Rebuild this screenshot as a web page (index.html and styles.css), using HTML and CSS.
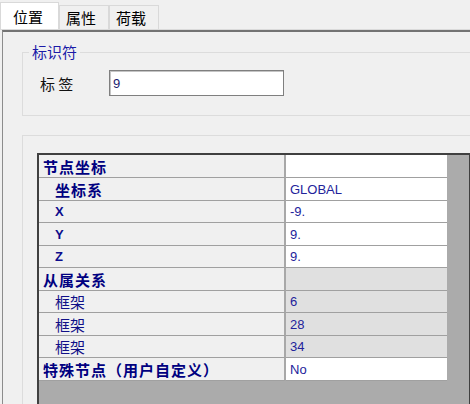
FILE: index.html
```html
<!DOCTYPE html>
<html lang="zh-CN">
<head>
<meta charset="utf-8">
<title>节点属性</title>
<link rel="stylesheet" href="styles.css">
</head>
<body>
<div class="tabs">
  <div class="tab tab-active">位置</div>
  <div class="tab">属性</div>
  <div class="tab">荷载</div>
</div>
<div class="panel">
  <fieldset class="group">
    <legend class="legend">标识符</legend>
    <div class="field-row">
      <label class="field-label" for="tag">标 签</label>
      <input class="field-input" id="tag" type="text" value="9">
    </div>
  </fieldset>
  <div class="group2">
    <div class="grid">
      <div class="row tall">
        <div class="cell key cat">节点坐标</div>
        <div class="cell val"></div>
      </div>
      <div class="row tall">
        <div class="cell key sub strong">坐标系</div>
        <div class="cell val">GLOBAL</div>
      </div>
      <div class="row">
        <div class="cell key sub lat">X</div>
        <div class="cell val">-9.</div>
      </div>
      <div class="row tall">
        <div class="cell key sub lat">Y</div>
        <div class="cell val">9.</div>
      </div>
      <div class="row">
        <div class="cell key sub lat">Z</div>
        <div class="cell val">9.</div>
      </div>
      <div class="row tall">
        <div class="cell key cat">从属关系</div>
        <div class="cell val ro"></div>
      </div>
      <div class="row">
        <div class="cell key sub">框架</div>
        <div class="cell val ro">6</div>
      </div>
      <div class="row tall">
        <div class="cell key sub">框架</div>
        <div class="cell val ro">28</div>
      </div>
      <div class="row">
        <div class="cell key sub">框架</div>
        <div class="cell val ro">34</div>
      </div>
      <div class="row tall">
        <div class="cell key cat">特殊节点（用户自定义）</div>
        <div class="cell val">No</div>
      </div>
    </div>
  </div>
</div>
</body>
</html>
```
FILE: styles.css
```css
html, body {
  margin: 0;
  padding: 0;
}
body {
  width: 470px;
  height: 404px;
  overflow: hidden;
  background: #f0f0f0;
  font-family: "Noto Sans CJK SC", "Noto Sans", sans-serif;
  color: #000;
}

/* tabs */
.tabs {
  display: flex;
  align-items: flex-end;
  height: 30px;
  box-sizing: border-box;
  border-bottom: 1px solid #dadada;
}
.tab {
  box-sizing: border-box;
  width: 50px;
  height: 24px;
  padding-left: 6px;
  border: 1px solid #d9d9d9;
  border-bottom: none;
  background: #f0f0f0;
  display: flex;
  align-items: center;
  font-size: 15px;
  line-height: 1;
}
.tab-active {
  width: 59px;
  height: 27px;
  padding-left: 12px;
  background: #fff;
}

/* panel */
.panel {
  box-sizing: border-box;
  margin-left: 2px;
  width: 468px;
  height: 374px;
  border-top: 2px solid #737373;
  border-left: 1px solid #8c8c8c;
  overflow: hidden;
}

.group {
  margin: 11px 0 0 19px;
  padding: 0;
  width: 448px;
  box-sizing: border-box;
  border: 1px solid #dcdcdc;
  border-right: none;
  min-width: 0;
}
.legend {
  margin-left: 6px;
  padding: 0 3px;
  font-size: 15px;
  line-height: 18px;
  color: #1b1ba8;
}
.field-row {
  display: flex;
  align-items: center;
  padding: 9px 0 19px 17px;
}
.field-label {
  width: 69px;
  font-size: 15px;
  line-height: 1;
  color: #111;
}
.field-input {
  box-sizing: border-box;
  width: 175px;
  height: 26px;
  margin: 0;
  padding: 0 0 0 3px;
  border: 1px solid #7f7f7f;
  box-shadow: inset 1px 1px 0 #c4c4c4;
  background: #fff;
  font-family: "Liberation Sans", Arial, sans-serif;
  font-size: 13px;
  color: #1b1b70;
  outline: none;
}

.group2 {
  box-sizing: border-box;
  margin: 19px 0 0 19px;
  padding: 17px 0 0 14px;
  width: 448px;
  height: 269px;
  border-top: 1px solid #dcdcdc;
  border-left: 1px solid #dcdcdc;
}

/* property grid */
.grid {
  box-sizing: border-box;
  width: 433px;
  height: 251px;
  border: 2px solid #404040;
  border-right-width: 1px;
  border-bottom: none;
  background: #ababab;
  overflow: hidden;
}
.row {
  display: grid;
  grid-template-columns: 247px 161px;
  height: 22px;
}
.row.tall {
  height: 23px;
}
.cell {
  box-sizing: border-box;
  border-bottom: 1px solid #a0a0a0;
  display: flex;
  align-items: center;
  line-height: 1;
  white-space: nowrap;
}
.key {
  background: #f0f0f0;
  border-right: 2px solid #a8a8a8;
  font-size: 15px;
  color: #101088;
}
.cat {
  padding-left: 4px;
  font-weight: bold;
  letter-spacing: 1px;
  color: #000080;
}
.sub {
  padding-left: 16px;
}
.strong {
  font-weight: bold;
  letter-spacing: 1px;
  color: #000080;
}
.lat {
  font-family: "Liberation Sans", Arial, sans-serif;
  font-size: 13px;
  font-weight: bold;
  color: #0c0c8c;
}
.val {
  background: #fff;
  padding-left: 4px;
  font-family: "Liberation Sans", Arial, sans-serif;
  font-size: 13px;
  color: #23239b;
}
.val.ro {
  background: #e0e0e0;
}
```
